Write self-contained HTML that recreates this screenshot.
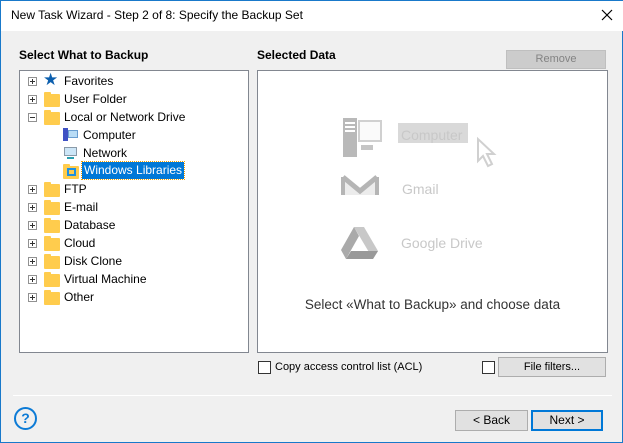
<!DOCTYPE html>
<html><head><style>
*{margin:0;padding:0;box-sizing:border-box}
body{width:623px;height:443px;background:#f0f0f0;font-family:"Segoe UI","Liberation Sans",sans-serif;font-size:12px;color:#000;position:relative;overflow:hidden;border:1px solid #1979ca;border-top:none}
.a{position:absolute}
.title{left:0;top:0;width:623px;height:31px;background:#fff;border-top:1px solid #1979ca}
.row{position:absolute;height:18px;line-height:18px;white-space:nowrap}
.exp{position:absolute;width:9px;height:9px;border:1px solid #919191;background:#fff}
.exp:before{content:"";position:absolute;left:1px;top:3px;width:5px;height:1px;background:#333}
.exp.p:after{content:"";position:absolute;left:3px;top:1px;width:1px;height:5px;background:#333}
.fold{position:absolute;width:16px;height:13px;background:#ffcc4d;border-radius:1px}
.fold:before{content:"";position:absolute;left:0;top:-2px;width:7px;height:3px;background:#ffcc4d;border-radius:1px 1px 0 0}
.btn{position:absolute;background:#e1e1e1;border:1px solid #adadad;text-align:center;font-size:11px}
.gray{color:#c8c8c8;font-size:14px}
</style></head><body>
<div class="a title"><div class="a" style="left:10px;top:7px;font-size:12px">New Task Wizard - Step 2 of 8: Specify the Backup Set</div>
<svg class="a" style="left:600px;top:8px" width="12" height="12"><path d="M1 1L11 11M11 1L1 11" stroke="#000" stroke-width="1.2"/></svg></div>
<div class="a" style="left:18px;top:48px;font-weight:bold">Select What to Backup</div>
<div class="a" style="left:256px;top:48px;font-weight:bold">Selected Data</div>
<div class="btn" style="left:505px;top:50px;width:100px;height:19px;line-height:17px;color:#838383;background:#ccc;border-color:#bfbfbf">Remove</div>
<div class="a" style="left:18px;top:70px;width:230px;height:283px;background:#fff;border:1px solid #828790"></div>
<div class="a" style="left:256px;top:70px;width:351px;height:283px;background:#fff;border:1px solid #828790"></div>

<div class="exp p" style="left:27px;top:77px"></div>
<div class="a" style="left:42px;top:71px;color:#0c5fae;font-size:17px;line-height:18px">★</div>
<div class="row" style="left:63px;top:72px">Favorites</div>
<div class="exp p" style="left:27px;top:95px"></div><div class="fold" style="left:43px;top:94px"></div><div class="row" style="left:63px;top:90px">User Folder</div>
<div class="exp" style="left:27px;top:113px"></div><div class="fold" style="left:43px;top:112px"></div><div class="row" style="left:63px;top:108px">Local or Network Drive</div>
<div class="a" style="left:62px;top:128px;width:5px;height:13px;background:#3f52c4"></div><div class="a" style="left:67px;top:130px;width:10px;height:8px;background:#b9dcf5;border:1px solid #6a9ed0"></div>
<div class="row" style="left:82px;top:126px">Computer</div>
<div class="a" style="left:63px;top:147px;width:13px;height:9px;background:#cde6f7;border:1px solid #8a9aa8"></div><div class="a" style="left:66px;top:157px;width:7px;height:2px;background:#2a9fb0"></div>
<div class="row" style="left:82px;top:144px">Network</div>
<div class="fold" style="left:62px;top:166px"></div><div class="a" style="left:66px;top:168px;width:9px;height:8px;border:2px solid #1e90e0"></div>
<div class="row" style="left:81px;top:162px;background:#0078d7;color:#fff;padding:0 2px;outline:1px dotted #f4a000;height:17px;line-height:17px">Windows Libraries</div>
<div class="exp p" style="left:27px;top:185px"></div><div class="fold" style="left:43px;top:184px"></div><div class="row" style="left:63px;top:180px">FTP</div>
<div class="exp p" style="left:27px;top:203px"></div><div class="fold" style="left:43px;top:202px"></div><div class="row" style="left:63px;top:198px">E-mail</div>
<div class="exp p" style="left:27px;top:221px"></div><div class="fold" style="left:43px;top:220px"></div><div class="row" style="left:63px;top:216px">Database</div>
<div class="exp p" style="left:27px;top:239px"></div><div class="fold" style="left:43px;top:238px"></div><div class="row" style="left:63px;top:234px">Cloud</div>
<div class="exp p" style="left:27px;top:257px"></div><div class="fold" style="left:43px;top:256px"></div><div class="row" style="left:63px;top:252px">Disk Clone</div>
<div class="exp p" style="left:27px;top:275px"></div><div class="fold" style="left:43px;top:274px"></div><div class="row" style="left:63px;top:270px">Virtual Machine</div>
<div class="exp p" style="left:27px;top:293px"></div><div class="fold" style="left:43px;top:292px"></div><div class="row" style="left:63px;top:288px">Other</div>

<svg class="a" style="left:340px;top:115px" width="160" height="160" viewBox="0 0 160 160">
<rect x="2" y="3" width="14" height="39" fill="#b9b9b9"/><rect x="4" y="7" width="10" height="2" fill="#fff"/><rect x="4" y="11" width="10" height="2" fill="#fff"/><rect x="4" y="15" width="10" height="2" fill="#fff"/>
<rect x="18" y="6" width="22" height="20" fill="#fafafa" stroke="#d0d0d0" stroke-width="2"/><rect x="20" y="30" width="12" height="5" fill="#c5c5c5"/>
<rect x="57" y="8" width="70" height="20" fill="#d9d9d9"/>
<path d="M137 24 L137 46 L142 41 L147 51 L151 49 L146 39 L153 39 Z" fill="#fff" stroke="#d0d0d0" stroke-width="2"/>
<path d="M2 62 L2 80 L36 80 L36 62 L19 74 Z" fill="#ececec"/><path d="M2 62 L19 76 L36 62" fill="none" stroke="#b5b5b5" stroke-width="5"/>
<path d="M2 62 L2 80 M36 62 L36 80" stroke="#b5b5b5" stroke-width="4"/>
<path d="M13 112 L23 112 L37 136 L32 144 Z" fill="#c8c8c8"/><path d="M13 112 L0 135 L5 144 L18 121 Z" fill="#aaa"/><path d="M5 144 L32 144 L37 136 L10 136 Z" fill="#999"/>
</svg>
<div class="a gray" style="left:400px;top:127px">Computer</div>
<div class="a gray" style="left:401px;top:181px">Gmail</div>
<div class="a gray" style="left:400px;top:235px">Google Drive</div>
<div class="a" style="left:256px;top:297px;width:351px;text-align:center;font-size:13.5px;color:#333">Select «What to Backup» and choose data</div>

<div class="a" style="left:257px;top:361px;width:13px;height:13px;border:1px solid #333;background:#fff"></div>
<div class="a" style="left:274px;top:361px;font-size:11px">Copy access control list (ACL)</div>
<div class="a" style="left:481px;top:361px;width:13px;height:13px;border:1px solid #333;background:#fff"></div>
<div class="btn" style="left:497px;top:357px;width:108px;height:20px;line-height:18px">File filters...</div>
<div class="a" style="left:12px;top:395px;width:599px;height:1px;background:#a0a0a0;border-bottom:1px solid #fff"></div>
<div class="a" style="left:13px;top:407px;width:23px;height:23px;border:2px solid #0c7bd6;border-radius:50%;color:#0c7bd6;font-weight:bold;text-align:center;line-height:19px;font-size:14px">?</div>
<div class="btn" style="left:454px;top:410px;width:73px;height:21px;line-height:19px;font-size:12px">&lt; Back</div>
<div class="btn" style="left:530px;top:410px;width:72px;height:21px;line-height:17px;border:2px solid #0078d7;font-size:12px">Next &gt;</div>
</body></html>
